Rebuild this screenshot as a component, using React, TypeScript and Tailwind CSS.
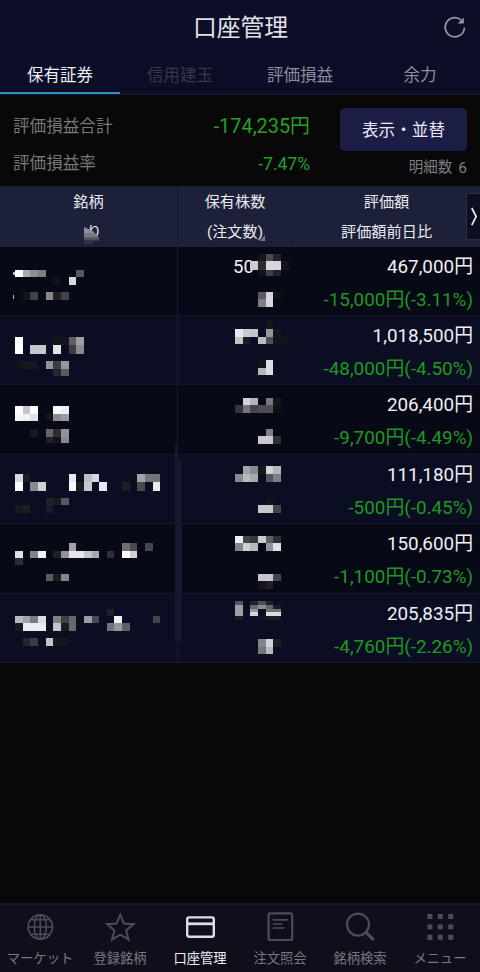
import React, { useState } from "react";
import clsx from "clsx";

// x, y, height, then one grey level (hex) per mosaic cell, ".." for an empty cell
type Strip = [number, number, number, string];

interface Holding {
  quantity?: string;
  value: string;
  change: string;
  mosaic: Strip[];
}

const CELL = 7.65;
const NAME_X = 15;
const QTY_X = 235;

const holdings: Holding[] = [
  {
    quantity: "50",
    value: "467,000円",
    change: "-15,000円(-3.11%)",
    mosaic: [
      [NAME_X, 22.5, 7.5, "ff aa 8d 7c .. .. .. .. 57"],
      [NAME_X, 30, 7.5, ".. .. .. .. .. 11 .. d8"],
      [NAME_X, 45.3, 7.7, ".. 14 40 .. 86 22 42"],
      [QTY_X, 6.8, 7.5, ".. .. .. 15 4a 22"],
      [QTY_X, 14, 8.5, ".. .. cc 2c d6 d6 14"],
      [QTY_X, 22.5, 6, ".. .. .. 13 3f 22"],
      [QTY_X, 44.5, 7.7, ".. .. .. 5a d6 13"],
      [QTY_X, 52.2, 7.6, ".. .. .. 7f d6"],
    ],
  },
  {
    value: "1,018,500円",
    change: "-48,000円(-4.50%)",
    mosaic: [
      [NAME_X, 21.4, 7.7, "ff .. .. .. .. 13 13 5d a0"],
      [NAME_X, 29.1, 8.7, "ff .. c6 c6 .. e2 .. 3a 8a"],
      [NAME_X, 45.1, 8, "13 17 17 .. 92 3c 96"],
      [NAME_X, 53.1, 6.5, ".. .. .. .. .. 24 59"],
      [QTY_X, 5.1, 8, ".. .. .. .. 15"],
      [QTY_X, 13.1, 7.7, "e8 c9 c4 .. 96 15"],
      [QTY_X, 20.8, 7.4, "c2 1c .. bc 4e 14 14"],
      [QTY_X, 44.1, 7.7, ".. .. .. 12 dc"],
      [QTY_X, 51.8, 7.5, ".. .. .. b5 dc"],
    ],
  },
  {
    value: "206,400円",
    change: "-9,700円(-4.49%)",
    mosaic: [
      [NAME_X, 20.7, 8.5, "ff c4 fa .. .. f8 ee"],
      [NAME_X, 29.2, 7, "f5 f0 e0 .. 15 8a 9a"],
      [NAME_X, 44, 8, ".. .. 17 .. 64 2c 92"],
      [NAME_X, 52, 6, ".. .. .. .. 1f 13 88"],
      [QTY_X, 12.7, 7.7, ".. d2 b4 .. 76 15"],
      [QTY_X, 20.4, 8, "34 74 45 4d 4d 10"],
      [QTY_X, 43.7, 7.7, ".. .. .. .. 7f"],
      [QTY_X, 51.4, 7.2, ".. .. .. c8 c8 2e"],
    ],
  },
  {
    value: "111,180円",
    change: "-500円(-0.45%)",
    mosaic: [
      [NAME_X, 19.3, 7.7, "d8 1d .. .. .. .. .. e8 .. bc d8 .. .. .. .. .. a2 74 74"],
      [NAME_X, 27, 8.6, "ff .. 89 d0 .. .. .. f6 1b c8 .. e8 .. .. 1e .. 49 .. e8"],
      [NAME_X, 43, 7.4, ".. .. .. .. 22 1a 58"],
      [NAME_X, 50.4, 7.3, "17 1e .. .. 1b"],
      [QTY_X, 11.3, 8, ".. a4 8a 15 d2 b4"],
      [QTY_X, 19.3, 7.7, "89 b8 a8 .. 55 7f"],
      [QTY_X, 43, 7.3, ".. .. .. .. 15"],
      [QTY_X, 50.3, 7.7, ".. .. .. c8 c8 44"],
    ],
  },
  {
    value: "150,600円",
    change: "-1,100円(-0.73%)",
    mosaic: [
      [NAME_X, 18.9, 7.7, ".. .. .. .. .. .. .. a2 .. .. .. .. .. .. 6f 4a .. 44"],
      [NAME_X, 26.6, 7.4, "e0 .. 84 f0 .. 20 92 e6 e6 c5 a8 .. 30 .. ff d0"],
      [NAME_X, 34, 7.3, "2c"],
      [NAME_X, 49.6, 7.4, ".. .. .. .. 5b 1b 84"],
      [QTY_X, 11.9, 7.4, "ee 44 38 c9 5e 30"],
      [QTY_X, 19.3, 7.3, "84 d0 b8 .. 92 e0"],
      [QTY_X, 49.6, 7.8, ".. .. .. c5 c5 44"],
      [QTY_X, 57.4, 7.4, ".. .. .. 14 20"],
    ],
  },
  {
    value: "205,835円",
    change: "-4,760円(-2.26%)",
    mosaic: [
      [NAME_X, 14.5, 7.3, ".. .. .. .. .. .. .. .. .. .. .. .. 1f"],
      [NAME_X, 21.8, 7.4, "b8 a4 7b dc .. 7f 41 67 .. 9c 49 .. .. f0 .. .. .. .. 44"],
      [NAME_X, 29.2, 7.6, "1a ea ea ea .. c5 1c 67 .. .. .. .. 73 96 5f"],
      [NAME_X, 44.2, 8, ".. 25 3a .. c3 15 15"],
      [QTY_X, 6.5, 4, "54 .. 22 4c 22"],
      [QTY_X, 10.5, 4.5, "9e .. 68 8c 62 1c"],
      [QTY_X, 15, 3.4, "9e .. 96 .. 70 70"],
      [QTY_X, 18.4, 3.8, "9e .. d6 .. dc dc"],
      [QTY_X, 22.2, 4, "1c .. .. 14 1c 1c"],
      [QTY_X, 44.5, 8, ".. .. .. 83 d3 1c"],
      [QTY_X, 52.5, 7.7, ".. .. .. 75 b8"],
    ],
  },
];

const tabs = [
  { label: "保有証券", disabled: false },
  { label: "信用建玉", disabled: true },
  { label: "評価損益", disabled: false },
  { label: "余力", disabled: false },
];

const Mosaic: React.FC<{ strips: Strip[]; first?: boolean }> = ({ strips, first }) => (
  <svg className="absolute inset-0 w-full h-full" shapeRendering="crispEdges" aria-hidden="true">
    {first && <path d="M13 25h3v3h-3zM12.5 48h1v4h-1z" fill="#b9b9c2" />}
    {strips.map(([x, y, h, levels], s) =>
      levels.split(" ").map((level, i) => {
        if (level === "..") return null;
        const v = parseInt(level, 16);
        return (
          <rect
            key={`${s}-${i}`}
            x={x + i * CELL}
            y={y}
            width={CELL}
            height={h}
            fill={`rgb(${v},${v},${Math.min(255, v + 7)})`}
          />
        );
      })
    )}
  </svg>
);

const navItems = [
  {
    label: "マーケット",
    icon: (
      <g strokeWidth="1.6">
        <circle cx="16.3" cy="16" r="12.2" />
        <ellipse cx="16.3" cy="16" rx="6" ry="12.2" />
        <path d="M16.3 3.8v24.4M4.1 16h24.4M6.8 8.8h19M6.8 23.2h19" />
      </g>
    ),
  },
  {
    label: "登録銘柄",
    icon: (
      <path
        d="M16.3 3.6l3.7 9 9.5.6-7.4 6.2 2.5 9.2-8.3-5-8.3 5 2.5-9.2-7.4-6.2 9.5-.6z"
        strokeWidth="2"
      />
    ),
  },
  {
    label: "口座管理",
    icon: (
      <>
        <rect x="3.2" y="6.4" width="26.6" height="19.4" rx="2" strokeWidth="2.4" />
        <path d="M3.2 12.8h26.6" strokeWidth="2.8" />
      </>
    ),
  },
  {
    label: "注文照会",
    icon: (
      <>
        <rect x="4.6" y="2.4" width="23.6" height="26.6" rx="1.4" strokeWidth="2.2" />
        <path d="M8.6 8.8h15.6M8.6 13h10M8.6 17h12" strokeWidth="1.7" />
      </>
    ),
  },
  {
    label: "銘柄検索",
    icon: (
      <>
        <circle cx="14" cy="13.6" r="11" strokeWidth="2.2" />
        <path d="M21.8 21.2l8 8" strokeWidth="3.2" />
      </>
    ),
  },
  {
    label: "メニュー",
    icon: (
      <g fill="currentColor" stroke="none">
        {[3, 13.4, 23.8].map((y) =>
          [3.4, 13.8, 24.2].map((x) => (
            <rect key={`${x}-${y}`} x={x} y={y} width="5" height="5" />
          ))
        )}
      </g>
    ),
  },
];

const App: React.FC = () => {
  const [activeTab, setActiveTab] = useState<number>(0);
  const [activeNav, setActiveNav] = useState<number>(2);

  return (
    <div className="w-[480px] h-[972px] flex flex-col overflow-hidden bg-[#080808] text-[#f0f0f5] font-[Roboto,'Noto_Sans_CJK_JP',sans-serif]">
      {/* Title bar */}
      <header className="relative h-14 shrink-0 flex items-center justify-center bg-[#0c0e27]">
        <h1 className="pt-[2px] pl-px text-[23.8px] leading-none text-[#e0e0ea]">口座管理</h1>
        <button className="absolute right-[13px] top-[15px] text-[#97979f]" aria-label="更新">
          <svg className="w-6 h-6" viewBox="0 0 24 24" fill="none" stroke="currentColor" strokeWidth="1.7">
            <path d="M21.4 12.4A9.6 9.6 0 1 1 18 4.9" />
            <path d="M20.8 2.4v6.2h-6.2z" fill="currentColor" stroke="none" />
          </svg>
        </button>
      </header>

      {/* Tabs */}
      <nav className="grid grid-cols-4 h-[39px] shrink-0 bg-[#0c0e27] border-b border-[#171a33]">
        {tabs.map((tab, i) => (
          <button
            key={tab.label}
            disabled={tab.disabled}
            onClick={() => setActiveTab(i)}
            className={clsx(
              "relative flex items-center justify-center pt-[3px] text-[16.5px] leading-none",
              tab.disabled ? "text-[#35374d]" : activeTab === i ? "text-[#eeeef6]" : "text-[#8c8c9b]"
            )}
          >
            {tab.label}
            {activeTab === i && (
              <span className="absolute left-0 right-0 bottom-0 h-[2px] bg-[#2f8fcb]" />
            )}
          </button>
        ))}
      </nav>

      {/* Summary */}
      <section className="h-[91px] shrink-0 flex pl-[13px] pr-[13px] pt-[13px]">
        <div className="w-[297px] flex flex-col">
          <div className="h-[37px] flex items-center justify-between">
            <span className="pt-px text-[16.6px] leading-none text-[#77777b]">評価損益合計</span>
            <span className="text-[19.9px] leading-none text-[#26a026]">-174,235円</span>
          </div>
          <div className="h-[38px] flex items-center justify-between">
            <span className="pt-px text-[16.6px] leading-none text-[#77777b]">評価損益率</span>
            <span className="pt-px text-[17.5px] leading-none text-[#26a026]">-7.47%</span>
          </div>
        </div>
        <div className="ml-auto flex flex-col items-end">
          <button className="w-[127px] h-[43px] pt-[3px] rounded-[5px] bg-[#1c1d44] text-[16.6px] leading-none text-[#e8e8f4]">
            表示・並替
          </button>
          <span className="mt-[10px] flex gap-[6px] text-[14.5px] leading-none text-[#7e7e83]">
            <span>明細数</span>
            <span className="text-[15.5px]">6</span>
          </span>
        </div>
      </section>

      {/* Holdings */}
      <section className="relative shrink-0">
        <div className="relative grid grid-cols-[178px_115px_187px] h-[60.6px] bg-[#1d2039] text-[15.2px] text-[#e9e9f0] text-center">
          <div className="relative border-r border-[#171a33]">
            <p className="h-[31px] leading-[33px]">銘柄</p>
            <p className="h-[29px] leading-[30px] pl-[11px]">り</p>
            <svg className="absolute left-[76px] top-[38px] w-7 h-[22px]" aria-hidden="true">
              <path d="M0 5h10l14 9v7H0z" fill="#1d2039" />
              <path d="M8 3l9 4 6 7H8z" fill="#8c8d98" />
              <path d="M8 9h11l4 5H8z" fill="#777883" />
              <path d="M8 13.5h15v3H8z" fill="#50525f" />
              <path d="M8 16.5h12l-5 3.5H8z" fill="#303247" />
            </svg>
          </div>
          <div className="relative border-r border-[#1a1d35]">
            <p className="h-[31px] leading-[33px]">保有株数</p>
            <p className="h-[29px] leading-[30px]">(注文数)</p>
            <svg className="absolute left-[82px] top-[49px] w-[6px] h-[7px]" aria-hidden="true">
              <path d="M5 0v6H0z" fill="#777986" />
            </svg>
          </div>
          <div>
            <p className="h-[31px] leading-[33px]">評価額</p>
            <p className="h-[29px] leading-[30px]">評価額前日比</p>
          </div>
          <button
            className="absolute right-0 top-[7px] w-[14px] h-[47px] bg-[#0d0f20] border border-r-0 border-[#2b2d42]"
            aria-label="次の列"
          >
            <svg className="w-[13px] h-[45px]" viewBox="0 0 13 45" fill="none" stroke="#e4e4ea" strokeWidth="1.8">
              <path d="M4.8 14l4.3 8.6-4.3 8.6" />
            </svg>
          </button>
        </div>

        {holdings.map((item, i) => (
          <div
            key={item.value}
            className={clsx(
              "relative grid grid-cols-[178px_115px_187px] h-[69.4px] border-b border-[#15182d]",
              i % 2 ? "bg-[#0b0e23]" : "bg-[#080917]"
            )}
          >
            <div className="border-r border-[#171a33]" />
            <div className="pl-[55px] text-[18.6px] leading-[41px]">{item.quantity}</div>
            <div className="pr-[7px] text-right text-[18.85px]">
              <p className="h-[36px] leading-[40px]">{item.value}</p>
              <p className="h-[33px] leading-[34px] text-[#1e991f]">{item.change}</p>
            </div>
            <Mosaic strips={item.mosaic} first={i === 0} />
          </div>
        ))}

        {/* Scroll thumb */}
        <span className="absolute left-[175px] top-[274px] w-[7px] h-[183px] rounded-b-sm bg-[#15182e]" />
        <span className="absolute left-[175px] top-[258px] w-[3px] h-[16px] bg-[#15182e]" />
      </section>

      {/* Bottom navigation */}
      <nav className="mt-auto h-[69px] shrink-0 grid grid-cols-6 bg-[#100e1b] border-t-2 border-[#191824]">
        {navItems.map((item, i) => (
          <button
            key={item.label}
            onClick={() => setActiveNav(i)}
            className="flex flex-col items-center pt-[6px] whitespace-nowrap"
          >
            <svg
              className={clsx("w-8 h-8", activeNav === i ? "text-[#dddde8]" : "text-[#4c4b57]")}
              viewBox="0 0 32 32"
              fill="none"
              stroke="currentColor"
            >
              {item.icon}
            </svg>
            <span
              className={clsx(
                "mt-[9px] text-[13.3px] leading-none",
                activeNav === i ? "text-[#ededf5]" : "text-[#777683]"
              )}
            >
              {item.label}
            </span>
          </button>
        ))}
      </nav>
    </div>
  );
};

export default App;
